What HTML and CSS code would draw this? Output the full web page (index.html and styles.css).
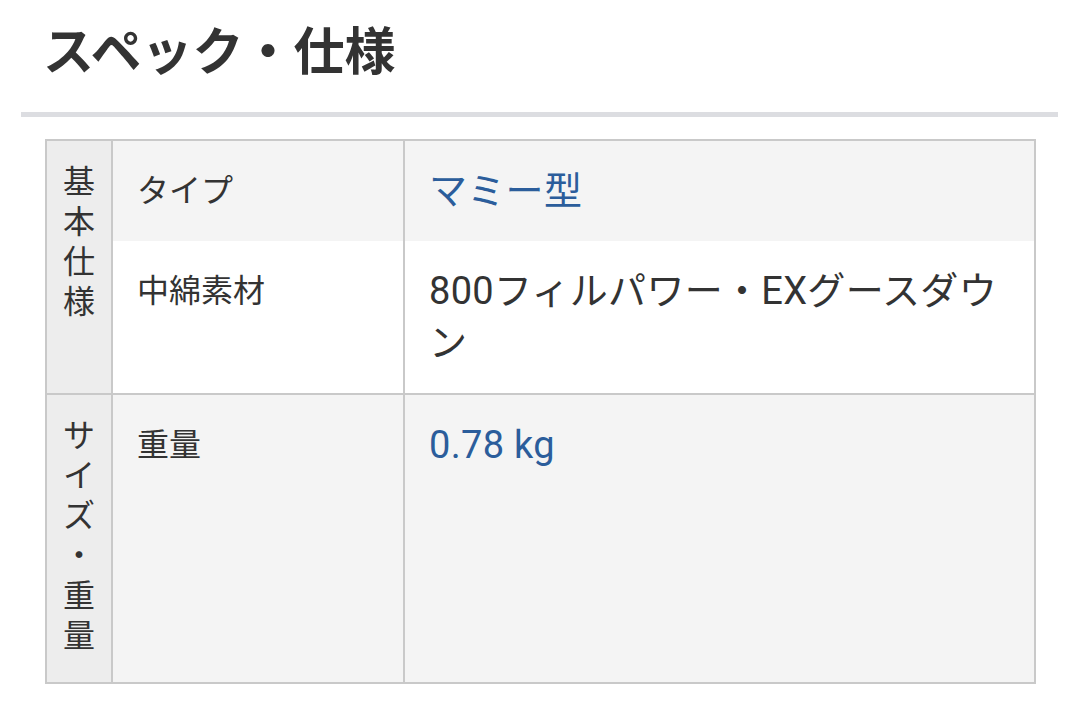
FILE: index.html
```html
<!DOCTYPE html>
<html lang="ja">
<head>
<meta charset="utf-8">
<title>スペック・仕様</title>
<link rel="stylesheet" href="styles.css">
</head>
<body>
<section class="spec">
  <h2 class="spec-title">スペック・仕様</h2>
  <table class="spec-table">
    <colgroup>
      <col class="c-group">
      <col class="c-key">
      <col class="c-val">
    </colgroup>
    <tbody class="group">
      <tr class="row-odd">
        <th class="group-head" rowspan="2">基本仕様</th>
        <th class="key">タイプ</th>
        <td class="val link">マミー型</td>
      </tr>
      <tr class="row-even">
        <th class="key">中綿素材</th>
        <td class="val">800フィルパワー・EXグースダウン</td>
      </tr>
    </tbody>
    <tbody class="group">
      <tr class="row-odd">
        <th class="group-head">サイズ・重量</th>
        <th class="key">重量</th>
        <td class="val link">0.78 kg</td>
      </tr>
    </tbody>
  </table>
</section>
</body>
</html>
```

FILE: styles.css
```css
html, body {
  margin: 0;
  padding: 0;
  background: #ffffff;
}

body {
  font-family: Roboto, "Noto Sans CJK JP", sans-serif;
  color: #333333;
}

.spec {
  padding: 0 22px 0 21px;
}

.spec-title {
  margin: 0;
  padding: 23px 0 29px 22px;
  font-size: 51px;
  line-height: 60px;
  font-weight: 700;
  color: #333333;
  border-bottom: 5px solid #dcdde1;
}

.spec-table {
  margin: 22px 0 0 24px;
  width: 989px;
  table-layout: fixed;
  border-collapse: collapse;
  border: 2px solid #c9c9c9;
}

.c-group { width: 66px; }
.c-key { width: 292px; }
.c-val { width: 631px; }

.group + .group {
  border-top: 2px solid #c9c9c9;
}

.spec-table th,
.spec-table td {
  border-left: 2px solid #c9c9c9;
  border-right: 2px solid #c9c9c9;
  vertical-align: top;
  text-align: left;
  font-weight: 400;
}

.row-odd { background: #f4f4f4; }
.row-even { background: #ffffff; }

.group-head {
  background: #ededed;
  padding: 21px 12px 26px;
  font-size: 32px;
  line-height: 40px;
  text-align: center !important;
  word-break: break-all;
  line-break: anywhere;
  color: #333333;
}

.key {
  padding: 24px;
  font-size: 32px;
  line-height: 52px;
  color: #333333;
}

.val {
  padding: 24px;
  font-size: 38px;
  line-height: 52px;
  color: #333333;
  letter-spacing: 0.3px;
}

.link {
  color: #2b5d9b;
}
```
